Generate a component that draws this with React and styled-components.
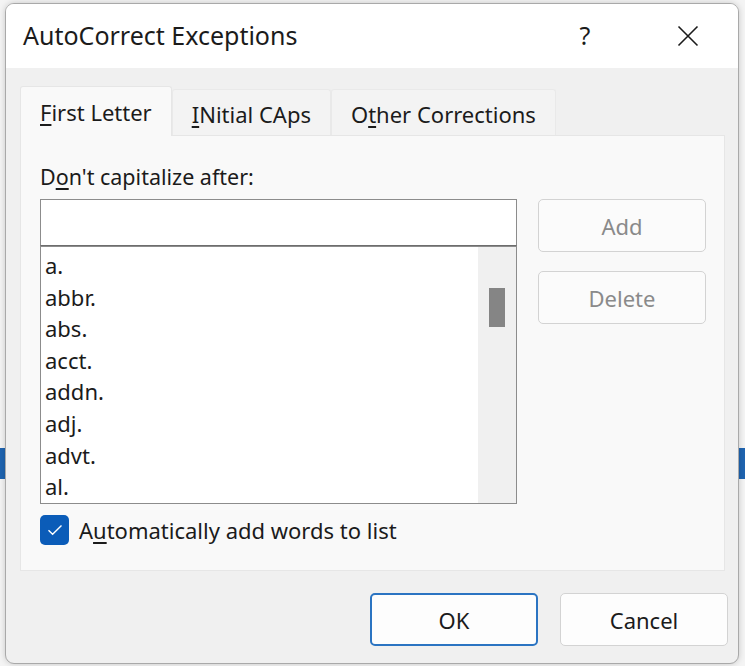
import React from "react";
import styled, { createGlobalStyle } from "styled-components";

const GlobalStyle = createGlobalStyle`
	html, body {
		margin: 0;
		padding: 0;
	}
	body {
		width: 745px;
		height: 666px;
		overflow: hidden;
		font-family: "Noto Sans", "Open Sans", "Liberation Sans", sans-serif;
		color: #1b1b1b;
		/* the app window peeking out behind the dialog */
		background:
			linear-gradient(to bottom, transparent 448px, #1f64b0 448px, #1f64b0 479px, transparent 479px),
			#f4f4f4;
	}
`;

const words = ["a.", "abbr.", "abs.", "acct.", "addn.", "adj.", "advt.", "al."];

const App = () => {
	return (
		<>
			<GlobalStyle />
			<Dialog>
				<TitleBar>
					<Title>AutoCorrect Exceptions</Title>
					<TitleActions>
						<HelpMark>?</HelpMark>
						<CloseButton aria-label='Close'>
							<svg width='22' height='22' viewBox='0 0 22 22'>
								<path
									d='M1.5 1.5 L20.5 20.5 M20.5 1.5 L1.5 20.5'
									stroke='#1b1b1b'
									strokeWidth='1.6'
									fill='none'
								/>
							</svg>
						</CloseButton>
					</TitleActions>
				</TitleBar>

				<Body>
					<TabRow>
						<Tab $active>
							<u>F</u>irst Letter
						</Tab>
						<Tab>
							<u>I</u>Nitial CAps
						</Tab>
						<Tab>
							O<u>t</u>her Corrections
						</Tab>
					</TabRow>

					<Panel>
						<FieldLabel>
							D<u>o</u>n't capitalize after:
						</FieldLabel>
						<FieldRow>
							<ListColumn>
								<TextInput />
								<WordList>
									<Words>
										{words.map((w) => (
											<WordItem key={w}>{w}</WordItem>
										))}
									</Words>
									<ScrollTrack>
										<ScrollThumb />
									</ScrollTrack>
								</WordList>
							</ListColumn>
							<ButtonColumn>
								<SideButton disabled>Add</SideButton>
								<SideButton disabled>Delete</SideButton>
							</ButtonColumn>
						</FieldRow>

						<CheckRow>
							<CheckBox>
								<svg width='16' height='12' viewBox='0 0 16 12'>
									<path
										d='M1.5 6.2 L5.6 10.2 L14.5 1.5'
										stroke='#fff'
										strokeWidth='1.4'
										fill='none'
									/>
								</svg>
							</CheckBox>
							<CheckLabel>
								A<u>u</u>tomatically add words to list
							</CheckLabel>
						</CheckRow>
					</Panel>

					<Footer>
						<DialogButton $primary>OK</DialogButton>
						<DialogButton>Cancel</DialogButton>
					</Footer>
				</Body>
			</Dialog>
		</>
	);
};

export default App;

/* --------------------------------------
       STYLED COMPONENTS
-------------------------------------- */

const Dialog = styled.div`
	box-sizing: border-box;
	margin: 3px 0 0 5px;
	width: 734px;
	height: 661px;
	border: 1px solid #a9a9a9;
	border-radius: 9px;
	overflow: hidden;
	background: #f0f0f0;
	display: flex;
	flex-direction: column;
	box-shadow: 0 0 6px rgba(0, 0, 0, 0.18);
`;

const TitleBar = styled.div`
	height: 64px;
	flex: none;
	background: #ffffff;
	display: flex;
	align-items: center;
	justify-content: space-between;
	padding: 0 0 0 17px;
`;

const Title = styled.span`
	font-size: 25px;
	padding-bottom: 2px;
`;

const TitleActions = styled.div`
	display: flex;
	align-items: center;
	height: 100%;
`;

const HelpMark = styled.span`
	width: 60px;
	text-align: center;
	font-size: 25px;
	margin-right: 43px;
	padding-bottom: 2px;
`;

const CloseButton = styled.div`
	width: 60px;
	margin-right: 20px;
	display: flex;
	justify-content: center;
	align-items: center;
`;

const Body = styled.div`
	flex: 1;
	display: flex;
	flex-direction: column;
	padding: 18px 13px 0 14px;
`;

const TabRow = styled.div`
	display: flex;
	align-items: flex-end;
	height: 49px;
`;

const Tab = styled.div`
	box-sizing: border-box;
	height: ${(p) => (p.$active ? "50px" : "46px")};
	margin-bottom: ${(p) => (p.$active ? "-1px" : "0")};
	padding: 0 19px;
	display: flex;
	align-items: center;
	font-size: 22px;
	background: ${(p) => (p.$active ? "#f9f9f9" : "#f3f3f3")};
	border: 1px solid ${(p) => (p.$active ? "#e6e6e6" : "#e9e9e9")};
	border-bottom: none;
	border-radius: 3px 3px 0 0;
	position: relative;
	z-index: ${(p) => (p.$active ? 1 : 0)};
	padding-top: ${(p) => (p.$active ? "0" : "3px")};

	u {
		text-underline-offset: 3px;
	}
`;

const Panel = styled.div`
	box-sizing: border-box;
	height: 436px;
	background: #f9f9f9;
	border: 1px solid #e6e6e6;
	padding: 26px 18px 0 19px;
	display: flex;
	flex-direction: column;
`;

const FieldLabel = styled.div`
	font-size: 21.5px;
	line-height: 30px;
	margin-bottom: 7px;

	u {
		text-underline-offset: 3px;
	}
`;

const FieldRow = styled.div`
	display: flex;
	gap: 21px;
`;

const ListColumn = styled.div`
	width: 478px;
	display: flex;
	flex-direction: column;
`;

const TextInput = styled.div`
	box-sizing: border-box;
	height: 47px;
	background: #ffffff;
	border: 1px solid #8c8c8c;
	border-bottom-color: #6d6d6d;
`;

const WordList = styled.div`
	box-sizing: border-box;
	height: 258px;
	background: #ffffff;
	border: 1px solid #8c8c8c;
	display: flex;
`;

const Words = styled.ul`
	flex: 1;
	list-style: none;
	margin: 0;
	padding: 3px 0 0 4px;
`;

const WordItem = styled.li`
	font-size: 22px;
	line-height: 31.6px;
`;

const ScrollTrack = styled.div`
	width: 38px;
	background: #f0f0f0;
	padding-top: 41px;
	display: flex;
	justify-content: center;
`;

const ScrollThumb = styled.div`
	width: 16px;
	height: 39px;
	background: #858585;
`;

const ButtonColumn = styled.div`
	display: flex;
	flex-direction: column;
	gap: 19px;
`;

const SideButton = styled.button`
	box-sizing: border-box;
	width: 168px;
	height: 53px;
	border: 1px solid #d3d3d3;
	border-radius: 5px;
	background: #fbfbfb;
	color: #8a8a8a;
	font-family: inherit;
	font-size: 22px;
	padding: 0;
`;

const CheckRow = styled.div`
	display: flex;
	align-items: center;
	gap: 10px;
	margin-top: 11px;
`;

const CheckBox = styled.div`
	width: 29px;
	height: 30px;
	border-radius: 5px;
	background: #0b5cb8;
	display: flex;
	align-items: center;
	justify-content: center;
`;

const CheckLabel = styled.span`
	font-size: 22px;

	u {
		text-underline-offset: 3px;
	}
`;

const Footer = styled.div`
	display: flex;
	justify-content: flex-end;
	gap: 22px;
	margin: 22px -3px 0 0;
`;

const DialogButton = styled.button`
	box-sizing: border-box;
	width: 168px;
	height: 53px;
	border-radius: 5px;
	background: #fdfdfd;
	border: ${(p) => (p.$primary ? "2px solid #2b74c2" : "1px solid #d3d3d3")};
	color: #1b1b1b;
	font-family: inherit;
	font-size: 22px;
	padding: 0;
`;
